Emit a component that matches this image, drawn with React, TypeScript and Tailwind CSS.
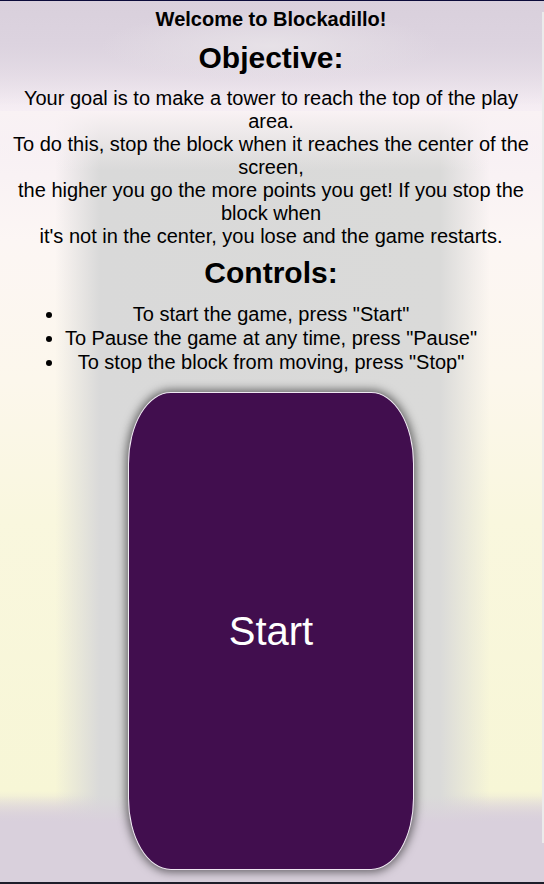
export default function App() {
  return (
    <div className="flex min-h-[884px] w-full border-t border-b-2 border-t-[#0b0b3a] border-b-[#1e1e2a] font-['Liberation_Sans',Arial,sans-serif] text-black [background:radial-gradient(ellipse_170px_35px_at_270px_45px,rgba(232,227,232,0.9),rgba(232,227,232,0)),linear-gradient(to_bottom,rgba(217,208,220,0)_795px,#d9d0dc_822px),linear-gradient(to_bottom,#d9d0dc_0px,#dcd3df_40px,rgba(247,239,245,0)_105px),linear-gradient(to_bottom,#f9f2f4,rgba(249,242,244,0))_0_110px/100%_60px_no-repeat,linear-gradient(to_right,rgba(217,217,217,0)_55px,#d9d9d9_100px,#dadad9_440px,rgba(218,218,217,0)_490px)_0_110px/100%_720px_no-repeat,linear-gradient(to_bottom,#d9d0dc_0px,#f6eef4_110px,#fcf6f4_240px,#fcf7ec_380px,#f9f7de_520px,#f7f6d6_790px,#d9d0dc_822px,#d8cfdb_884px)]">
      {/* Page body */}
      <main className="flex flex-1 flex-col items-center px-2 pt-[7px] pb-2 text-center">
        <h1 className="text-[20px] leading-[23px] font-bold">Welcome to Blockadillo!</h1>

        <h2 className="mt-[10px] text-[30px] leading-[34.5px] font-bold">Objective:</h2>
        <p className="mt-[11px] text-[20px] leading-[23px]">
          Your goal is to make a tower to reach the top of the play area.
          <br />
          To do this, stop the block when it reaches the center of the screen,
          <br />
          the higher you go the more points you get! If you stop the block when
          <br />
          it's not in the center, you lose and the game restarts.
        </p>

        <h2 className="mt-[8px] text-[30px] leading-[34.5px] font-bold">Controls:</h2>
        <ul className="mt-[12px] w-fit list-disc px-10 text-[20px] leading-[24px]">
          <li>To start the game, press "Start"</li>
          <li>To Pause the game at any time, press "Pause"</li>
          <li>To stop the block from moving, press "Stop"</li>
        </ul>

        <button className="mt-[18px] h-[478px] w-[286px] rounded-[15%] border border-[#efe8f2] bg-[#410e4e] text-[40px] text-white shadow-[0_0_10px_2px_rgba(0,0,0,0.55)]">
          Start
        </button>
      </main>

      {/* thin strip on the right edge */}
      <div className="w-[2px]">
        <div className="mt-[11px] h-[831px] bg-[#ebebeb]" />
      </div>
    </div>
  );
}
